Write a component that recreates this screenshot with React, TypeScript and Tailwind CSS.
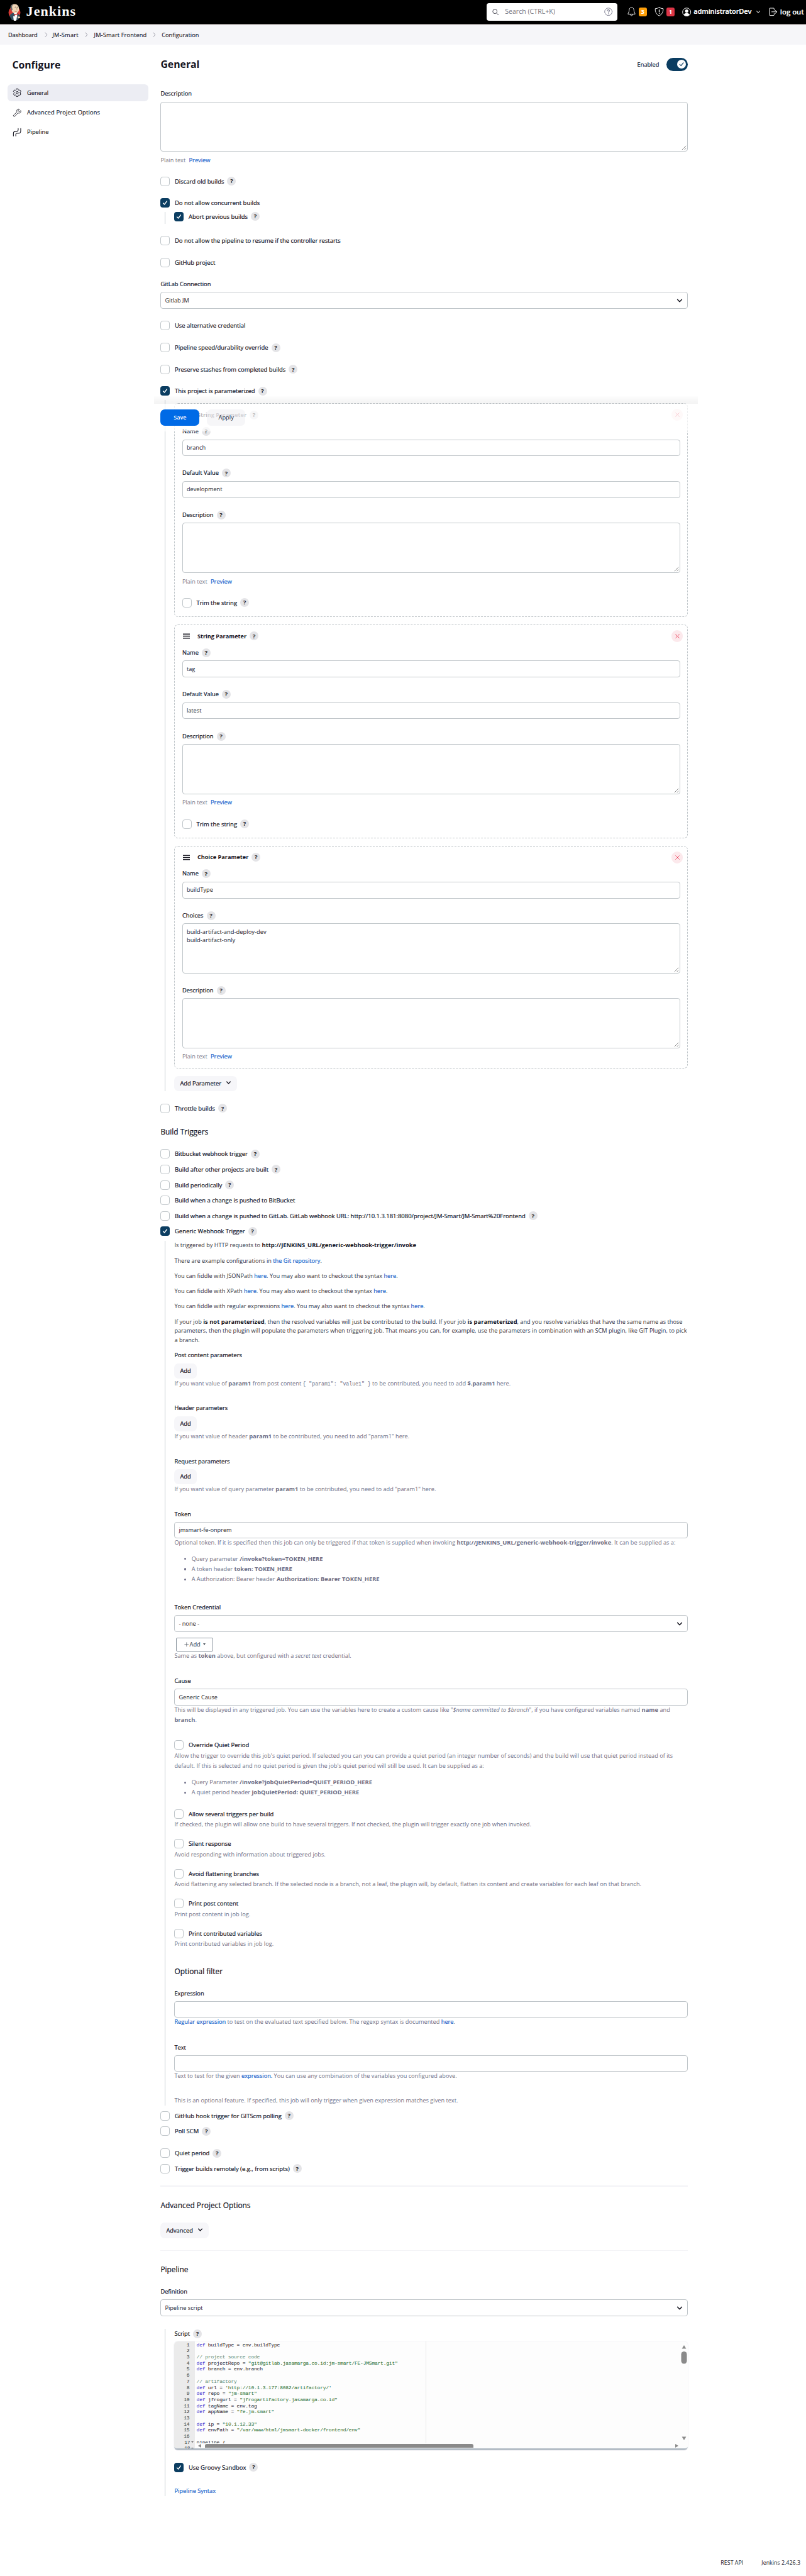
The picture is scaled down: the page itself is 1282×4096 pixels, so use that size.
import React, { ReactNode } from "react";

function Help({ className = "" }: { className?: string }) {
  return (
    <span className={`inline-flex h-[14px] w-[14px] shrink-0 items-center justify-center rounded-full bg-[#e4e4e7] text-[9.6px] font-bold leading-none tracking-normal text-[#1c1c24] [-webkit-text-stroke:0px] ${className}`}>
      ?
    </span>
  );
}

function Tick() {
  return (
    <svg viewBox="0 0 15 15" className="h-full w-full" fill="none" stroke="#fff" strokeWidth="1.4" strokeLinecap="round" strokeLinejoin="round">
      <path d="M4.6 8 L6.6 10 L10.4 4.9" />
    </svg>
  );
}

function Check({ label, on = false, help = false, className = "" }: { label: string; on?: boolean; help?: boolean; className?: string }) {
  return (
    <div className={`flex h-[15px] items-center whitespace-nowrap ${className}`}>
      <span className={on ? "h-[15px] w-[15px] shrink-0 rounded-[4px] bg-[#0b3d61]" : "h-[15px] w-[15px] shrink-0 rounded-[4px] border border-[#c0c6ca] bg-white"}>
        {on && <Tick />}
      </span>
      <span className="ml-[7.6px] text-[9.45px] font-medium leading-[15px] text-[#14141f] [-webkit-text-stroke:0.2px]">{label}</span>
      {help && <Help className="ml-[5px]" />}
    </div>
  );
}

function Label({ children, help = false, className = "" }: { children: ReactNode; help?: boolean; className?: string }) {
  return (
    <div className={`flex h-[14px] items-center whitespace-nowrap text-[9.3px] font-medium leading-[14px] text-[#14141f] [-webkit-text-stroke:0.2px] ${className}`}>
      {children}
      {help && <Help className="ml-[5px]" />}
    </div>
  );
}

function Input({ value = "", select = false, className = "h-[26.6px]" }: { value?: string; select?: boolean; className?: string }) {
  return (
    <div className={`flex items-center justify-between rounded-[4px] border border-[#bfc5c9] bg-white pl-[6px] pr-[7px] text-[9.2px] text-[#22222c] ${className}`}>
      <span>{value}</span>
      {select && (
        <svg viewBox="0 0 10 10" className="h-[10px] w-[10px]" fill="none" stroke="#14141f" strokeWidth="1.5" strokeLinecap="round" strokeLinejoin="round">
          <path d="M1.6 3.2 L5 6.8 L8.4 3.2" />
        </svg>
      )}
    </div>
  );
}

function Area({ lines = [], className = "" }: { lines?: string[]; className?: string }) {
  return (
    <div className={`relative h-[79.3px] rounded-[4px] border border-[#bfc5c9] bg-white pl-[6px] pt-[6px] text-[9.4px] leading-[13.2px] text-[#22222c] ${className}`}>
      {lines.map((l) => (
        <div key={l}>{l}</div>
      ))}
      <svg viewBox="0 0 8 8" className="absolute bottom-[1px] right-[1px] h-[8px] w-[8px]" stroke="#6b6b6b" strokeWidth="0.8">
        <path d="M0.8 7.2 L7.2 0.8 M4.6 7.2 L7.2 4.6" />
      </svg>
    </div>
  );
}

function PlainPreview({ className = "" }: { className?: string }) {
  return (
    <div className={`flex h-[14px] items-center gap-[5.3px] text-[9.2px] leading-[14px] text-[#7c7c88] ${className}`}>
      <span>Plain text</span>
      <span className="text-[9.3px] font-medium text-[#1a66cc] [-webkit-text-stroke:0.2px]">Preview</span>
    </div>
  );
}

function A({ children }: { children: ReactNode }) {
  return <span className="font-medium text-[#1a66cc] [-webkit-text-stroke:0.2px]">{children}</span>;
}

function Hint({ children, className = "" }: { children: ReactNode; className?: string }) {
  return <div className={`whitespace-nowrap text-[9.2px] leading-[16.2px] text-[#6e6e84] ${className}`}>{children}</div>;
}

function Para({ children }: { children: ReactNode }) {
  return <p className="whitespace-nowrap text-[9.2px] leading-[14.55px] text-[#30303c]">{children}</p>;
}

function B({ children, className = "" }: { children: ReactNode; className?: string }) {
  return <b className={`text-[9.38px] font-bold leading-none ${className}`}>{children}</b>;
}

function Bullet({ children, className = "h-[16.3px]" }: { children: ReactNode; className?: string }) {
  return (
    <li className={`flex items-center whitespace-nowrap pl-[15.5px] text-[9.2px] text-[#6e6e84] ${className}`}>
      <span className="mr-[8.6px] h-[3.2px] w-[3.2px] rounded-full bg-[#73738c]" />
      <span>{children}</span>
    </li>
  );
}

function Btn({ children, chevron = false, className = "" }: { children: ReactNode; chevron?: boolean; className?: string }) {
  return (
    <div className={`flex w-fit items-center whitespace-nowrap rounded-[7px] bg-[#f6f6f9] px-[9px] text-[9.3px] font-medium text-[#14141f] [-webkit-text-stroke:0.2px] ${className}`}>
      {children}
      {chevron && (
        <svg viewBox="0 0 10 10" className="-mt-[2px] ml-[7px] h-[9px] w-[9px]" fill="none" stroke="#14141f" strokeWidth="1.4" strokeLinecap="round" strokeLinejoin="round">
          <path d="M1.8 3.4 L5 6.7 L8.2 3.4" />
        </svg>
      )}
    </div>
  );
}

function Card({ title, children, className = "" }: { title: string; children: ReactNode; className?: string }) {
  return (
    <section className={`rounded-[6px] border border-dashed border-[#bfc5c9] bg-white pl-[11.5px] pr-[11.1px] pt-[8.2px] ${className}`}>
      <div className="flex h-[18.5px] items-center pl-[1px]">
        <svg viewBox="0 0 12 9" className="h-[9px] w-[12px]" stroke="#1c1c26" strokeWidth="1.5">
          <path d="M0 1.2 H11 M0 4.5 H11 M0 7.8 H11" />
        </svg>
        <span className="ml-[11px] text-[9.15px] font-bold text-[#14141f]">{title}</span>
        <Help className="ml-[5px]" />
        <span className="-mr-[4px] ml-auto flex h-[18.5px] w-[18.5px] items-center justify-center rounded-full bg-[#fce9ec]">
          <svg viewBox="0 0 8 8" className="h-[7px] w-[7px]" stroke="#e6203f" strokeWidth="0.9">
            <path d="M0.5 0.5 L7.5 7.5 M7.5 0.5 L0.5 7.5" />
          </svg>
        </span>
      </div>
      <div className="pt-[9.9px]">{children}</div>
    </section>
  );
}

function StringCard({ name, value, className = "" }: { name: string; value: string; className?: string }) {
  return (
    <Card title="String Parameter" className={`h-[339.6px] ${className}`}>
      <Label help>Name</Label>
      <Input value={name} className="mt-[5.7px] h-[26.6px]" />
      <Label help className="mt-[20.2px]">Default Value</Label>
      <Input value={value} className="mt-[5.7px] h-[26.6px]" />
      <Label help className="mt-[20.2px]">Description</Label>
      <Area className="mt-[5.7px]" />
      <PlainPreview className="mt-[6.8px]" />
      <Check label="Trim the string" help className="mt-[19.2px]" />
    </Card>
  );
}

function Nested({ children, className = "" }: { children: ReactNode; className?: string }) {
  return <div className={`ml-[7px] border-l border-[#c3c9cd] pl-[14px] ${className}`}>{children}</div>;
}

function ParamAdd({ title, children, className = "mt-[25.9px]" }: { title: string; children: ReactNode; className?: string }) {
  return (
    <div className={className}>
      <Label>{title}</Label>
      <Btn className="mt-[5.3px] h-[24.4px]">Add</Btn>
      <Hint className="h-[14.6px] leading-[14.6px]">{children}</Hint>
    </div>
  );
}

function H2({ children, className = "" }: { children: ReactNode; className?: string }) {
  return <h2 className={`h-[18px] text-[11.9px] font-medium leading-[18px] text-[#14141f] [-webkit-text-stroke:0.2px] ${className}`}>{children}</h2>;
}

type Tok = [string, string?];
const K = "text-[#1f1fd0]";
const S = "text-[#1c6b2c]";
const C = "text-[#5a8a72]";
const code: Tok[][] = [
  [["def", K], [" buildType = env.buildType"]],
  [],
  [["// project source code", C]],
  [["def", K], [" projectRepo = "], ['"git@gitlab.jasamarga.co.id:jm-smart/FE-JMSmart.git"', S]],
  [["def", K], [" branch = env.branch"]],
  [],
  [["// artifactory", C]],
  [["def", K], [" url = "], ["'http://10.1.3.177:8082/artifactory/'", S]],
  [["def", K], [" repo = "], ['"jm-smart"', S]],
  [["def", K], [" jfrogurl = "], ['"jfrogartifactory.jasamarga.co.id"', S]],
  [["def", K], [" tagName = env.tag"]],
  [["def", K], [" appName = "], ['"fe-jm-smart"', S]],
  [],
  [["def", K], [" ip = "], ['"10.1.12.33"', S]],
  [["def", K], [" envPath = "], ['"/var/www/html/jmsmart-docker/frontend/env"', S]],
  [],
  [["pipeline {"]],
  [],
];

function Editor() {
  return (
    <div className="relative mt-[5.7px] h-[172.3px] overflow-hidden rounded-[6px] border-b-[3px] border-[#b4bdc6] bg-[#fdfdfd] font-['Liberation_Mono',monospace] text-[8px] leading-[9.68px] tracking-[-0.23px] text-[#14141f] shadow-[0_0_0_1px_#f5f5f8]">
      <div className="flex h-full">
        <div className="h-full w-[33px] bg-[#ebebeb] pt-[0.6px]">
          {code.map((_, i) => (
            <div key={i} className="flex h-[9.68px] justify-end pr-[9px] text-[#333]">
              <span>{i + 1}</span>
              {i > 15 && <span className="-mr-[6.5px] ml-[1.5px] mt-[3.6px] h-0 w-0 border-x-[2.4px] border-t-[2.8px] border-x-transparent border-t-[#555]" />}
            </div>
          ))}
        </div>
        <div className="h-[161.7px] w-[368px] overflow-hidden border-r border-[#e8e8e8] pl-[2.2px] pt-[0.6px]">
          {code.map((line, i) => (
            <div key={i} className="h-[9.68px] whitespace-pre">
              {line.map(([t, c], j) => (
                <span key={j} className={c}>{t}</span>
              ))}
            </div>
          ))}
        </div>
      </div>
      <svg viewBox="0 0 12 158" className="absolute right-[0.5px] top-[3px] h-[158px] w-[12px]" fill="#8a8a8a">
        <path d="M6 3 L9.4 8.4 H2.6 Z" />
        <rect x="1.5" y="13" width="9" height="19.6" rx="4.5" />
        <path d="M6 154 L9.4 148.4 H2.6 Z" />
      </svg>
      <div className="absolute bottom-0 left-[33px] right-0 flex h-[7px] items-center bg-[#fdfdfd] pl-[5px]">
        <span className="h-0 w-0 border-y-[3.2px] border-r-[5px] border-y-transparent border-r-[#8a8a8a]" />
        <span className="ml-[5.6px] h-[6.6px] w-[427.5px] rounded-t-[3px] bg-[#8a8a8a]" />
        <span className="ml-auto mr-[15px] h-0 w-0 border-y-[3.2px] border-l-[5px] border-y-transparent border-l-[#8a8a8a]" />
      </div>
    </div>
  );
}

function Logo() {
  return (
    <svg viewBox="0 0 40 54" className="h-[27px] w-[20px]">
      <ellipse cx="20" cy="28" rx="19" ry="19.5" fill="#d33833" />
      <path d="M12 52 L5 40 Q5 33 13 30 L22 28 L34 33 Q38 38 37 44 L30 52 Z" fill="#335061" />
      <path d="M8 12 Q7 2 19 0.8 Q32 0.5 34 12 Q36 22 31 27 Q26 32 19 30 Q12 27 11 20 Z" fill="#f0d6b7" />
      <path d="M7.5 15 Q5.5 3 18 1 Q11 5 12.6 13 L14 19 L11 22 Q8 20 7.5 15 Z" fill="#6d6b6d" />
      <path d="M21 11.6 q2.5-2.4 4.6-0.4 M28 11 q2.4-1.8 4.2 0.4" fill="none" stroke="#231f20" strokeWidth="1.3" />
      <path d="M27 13 Q30 18 27 19.4 M20 23.6 Q25 26.6 29 23" fill="none" stroke="#8a5a3c" strokeWidth="1.2" />
      <path d="M18 30 L27 28 L29 40 L23 45 Z" fill="#fff" />
      <path d="M19 31 L25 33.4 L31 30 L31 37 L25 34.6 L20 38 Z" fill="#d33833" />
      <path d="M16 40 H28 L26 53 Q21 55 17.6 53 Z" fill="#fff" />
      <path d="M30 41 Q37 39 38.4 43 Q37 47 31 46 Z" fill="#f0d6b7" />
    </svg>
  );
}

function Header() {
  return (
    <header className="flex h-[39px] shrink-0 items-center border-b border-[#6e6462] bg-black pl-[13px] text-white">
      <Logo />
      <span className="-mt-[1.5px] ml-[8.6px] font-['Liberation_Serif',serif] text-[22px] font-bold leading-none tracking-[1.05px]">Jenkins</span>
      <div className="-mt-[0.5px] ml-auto mr-[15.5px] flex h-[27.6px] w-[207.7px] items-center rounded-[4px] bg-white pl-[9px] pr-[7.5px]">
        <svg viewBox="0 0 12 12" className="h-[10.5px] w-[10.5px]" fill="none" stroke="#333340" strokeWidth="1">
          <circle cx="4.8" cy="4.8" r="3.9" />
          <path d="M7.7 7.7 L11.4 11.4" />
        </svg>
        <span className="ml-[9.4px] text-[10.6px] text-[#75757f]">Search (CTRL+K)</span>
        <svg viewBox="0 0 14 14" className="ml-auto h-[13.4px] w-[13.4px]" fill="none" stroke="#6a6a80" strokeWidth="0.9" strokeLinecap="round">
          <circle cx="7" cy="7" r="6.2" />
          <path d="M5.2 5.4 Q5.3 3.7 7 3.7 Q8.8 3.8 8.8 5.3 Q8.8 6.3 7.7 6.9 Q7 7.3 7 8.2" strokeWidth="1.1" />
          <path d="M7 10.3 v0.1" strokeWidth="1.4" />
        </svg>
      </div>
      <div className="-mt-[0.5px] flex h-[27.6px] w-[284.5px] items-center text-[11.4px]">
        <svg viewBox="0 0 14 16" className="h-[15px] w-[13px]" fill="none" stroke="#fff" strokeWidth="1" strokeLinejoin="round">
          <path d="M7 1 C3.9 1 2.9 3.4 2.9 5.6 C2.9 8.8 1.2 10.2 0.9 12.2 H13.1 C12.8 10.2 11.1 8.8 11.1 5.6 C11.1 3.4 10.1 1 7 1 Z" />
          <path d="M5.2 12.4 Q5.3 14.8 7 14.8 Q8.7 14.8 8.8 12.4" />
        </svg>
        <span className="ml-[5px] flex h-[14px] w-[13.5px] items-center justify-center rounded-[3px] bg-[#fe9f0a] text-[9.5px] font-bold">3</span>
        <svg viewBox="0 0 16 16" className="ml-[12px] h-[15px] w-[15px]" fill="none" stroke="#fff" strokeWidth="1" strokeLinejoin="round" strokeLinecap="round">
          <path d="M8 1 Q5 2.8 1.2 3 Q0.8 11.4 8 15.2 Q15.2 11.4 14.8 3 Q11 2.8 8 1 Z" />
          <path d="M8 5 V8.6 M8 11 v0.2" strokeWidth="1.4" />
        </svg>
        <span className="ml-[3.7px] flex h-[14px] w-[13.5px] items-center justify-center rounded-[3px] bg-[#dc3546] text-[9.5px] font-bold">1</span>
        <svg viewBox="0 0 16 16" className="ml-[12px] h-[14.4px] w-[14.4px]">
          <circle cx="8" cy="8" r="7.2" fill="none" stroke="#fff" strokeWidth="1.1" />
          <circle cx="8" cy="6.2" r="2.9" fill="#fff" />
          <path d="M2.9 12.6 Q4 9.8 8 9.8 Q12 9.8 13.1 12.6 Q11 15 8 15 Q5 15 2.9 12.6 Z" fill="#fff" />
        </svg>
        <span className="ml-[3.6px] w-[93px] text-[11.1px] font-semibold tracking-[-0.15px] [-webkit-text-stroke:0.2px]">administratorDev</span>
        <svg viewBox="0 0 10 10" className="ml-[6px] h-[8px] w-[8px]" fill="none" stroke="#ddd" strokeWidth="1.3">
          <path d="M1.6 3 L5 6.6 L8.4 3" />
        </svg>
        <svg viewBox="0 0 14 14" className="ml-[13px] h-[13.6px] w-[13.6px]" fill="none" stroke="#fff" strokeWidth="1" strokeLinecap="round" strokeLinejoin="round">
          <path d="M8.6 4.2 V2.2 Q8.6 1 7.4 1 H2 Q0.8 1 0.8 2.2 V11.8 Q0.8 13 2 13 H7.4 Q8.6 13 8.6 11.8 V9.8" />
          <path d="M4.6 7 H13 M10.8 4.6 L13.2 7 L10.8 9.4" />
        </svg>
        <span className="ml-[4px] whitespace-nowrap font-semibold [-webkit-text-stroke:0.2px]">log out</span>
      </div>
    </header>
  );
}

function Sep() {
  return (
    <svg viewBox="0 0 5 9" className="-mt-[1px] h-[8.5px] w-[4.6px]" fill="none" stroke="#8a8a98" strokeWidth="0.9">
      <path d="M0.8 0.6 L4.2 4.5 L0.8 8.4" />
    </svg>
  );
}

function Sidebar() {
  return (
    <aside className="w-[255.4px] shrink-0 pl-[12px]">
      <h1 className="ml-[7.4px] mt-[22px] h-[20px] text-[15.8px] font-bold leading-[20px] text-[#14141f]">Configure</h1>
      <nav className="mt-[21.3px] flex w-[223.5px] flex-col gap-[3.9px] text-[9.3px] font-medium text-[#14141f] [-webkit-text-stroke:0.15px]">
        <div className="flex h-[27.3px] items-center gap-[8.4px] rounded-[6px] bg-[#ecedf3] pl-[8px]">
          <svg viewBox="0 0 512 512" className="h-[14.6px] w-[14.6px]" fill="none" stroke="#14141f" strokeWidth="34" strokeLinecap="round" strokeLinejoin="round">
            <path d="M262.29 192.31a64 64 0 1057.4 57.4 64.13 64.13 0 00-57.4-57.4zM416.39 256a154.34 154.34 0 01-1.53 20.79l45.21 35.46a10.81 10.81 0 012.45 13.75l-42.77 74a10.81 10.81 0 01-13.14 4.59l-44.9-18.08a16.11 16.11 0 00-15.17 1.75A164.48 164.48 0 01325 400.8a15.94 15.94 0 00-8.82 12.14l-6.73 47.89a11.08 11.08 0 01-10.68 9.17h-85.54a11.11 11.11 0 01-10.69-8.87l-6.72-47.82a16.07 16.07 0 00-9-12.22 155.3 155.3 0 01-21.46-12.57 16 16 0 00-15.11-1.71l-44.89 18.07a10.81 10.81 0 01-13.14-4.58l-42.77-74a10.8 10.8 0 012.45-13.75l38.21-30a16.05 16.05 0 006-14.08c-.36-4.17-.58-8.33-.58-12.5s.21-8.27.58-12.35a16 16 0 00-6.07-13.94l-38.19-30A10.81 10.81 0 0149.48 186l42.77-74a10.81 10.81 0 0113.14-4.59l44.9 18.08a16.11 16.11 0 0015.17-1.75A164.48 164.48 0 01187 111.2a15.94 15.94 0 008.82-12.14l6.73-47.89A11.08 11.08 0 01213.23 42h85.54a11.11 11.11 0 0110.69 8.87l6.72 47.82a16.07 16.07 0 009 12.22 155.3 155.3 0 0121.46 12.57 16 16 0 0015.11 1.71l44.89-18.07a10.81 10.81 0 0113.14 4.58l42.77 74a10.8 10.8 0 01-2.45 13.75l-38.21 30a16.05 16.05 0 00-6.05 14.08c.33 4.14.55 8.3.55 12.47z" />
          </svg>
          General
        </div>
        <div className="flex h-[27.3px] items-center gap-[8.4px] pl-[8px]">
          <svg viewBox="0 0 512 512" className="h-[14.6px] w-[14.6px]" fill="none" stroke="#14141f" strokeWidth="30" strokeLinecap="round" strokeLinejoin="round">
            <path d="M393.87 190a32.1 32.1 0 01-45.25 0l-26.57-26.57a32.09 32.09 0 010-45.26L382.19 58a1 1 0 00-.3-1.64c-38.82-16.64-89.15-8.16-121.11 23.57-30.58 30.35-32.32 76-21.12 115.84a31.93 31.93 0 01-9.06 32.08L64 380a48.17 48.17 0 1068 68l153.86-167a31.93 31.93 0 0131.6-9.13c39.54 10.59 84.54 8.6 114.72-21.19 32.49-32 39.5-88.56 23.75-120.93a1 1 0 00-1.6-.26z" />
          </svg>
          <span className="tracking-[0.18px]">Advanced Project Options</span>
        </div>
        <div className="flex h-[27.3px] items-center gap-[8.4px] pl-[8px]">
          <svg viewBox="0 0 16 16" className="h-[14.6px] w-[14.6px]" fill="none" stroke="#14141f" strokeWidth="1.2" strokeLinecap="round" strokeLinejoin="round">
            <path d="M1.5 14.6 V10 Q1.5 6.4 5 6.4 H7 Q9.8 6.4 9.8 3.6 V1.4" />
            <path d="M5.6 14.6 V11.6 Q5.6 9.9 7.4 9.9 H10 Q14.2 9.9 14.2 5.8 V1.4" />
          </svg>
          Pipeline
        </div>
      </nav>
    </aside>
  );
}

export default function App() {
  return (
    <div className="relative flex h-[4096px] w-[1282px] flex-col overflow-hidden bg-white font-['Open_Sans',sans-serif]">
      <Header />
      <div className="flex h-[31.8px] shrink-0 items-center whitespace-nowrap bg-[#f6f6f9] pl-[13px] pt-[1.4px] text-[9.3px] text-[#14141f] [-webkit-text-stroke:0.1px]">
        <span className="w-[58.4px] tracking-[-0.15px]">Dashboard</span>
        <Sep />
        <span className="ml-[7.4px] w-[51.6px] tracking-[0.2px]">JM-Smart</span>
        <Sep />
        <span className="ml-[10px] w-[93.6px] tracking-[0.1px]">JM-Smart Frontend</span>
        <Sep />
        <span className="ml-[9.4px]">Configuration</span>
      </div>

      <div className="flex">
        <Sidebar />
        <main className="w-[839px]">
          <div className="mt-[21.4px] flex h-[20.6px] items-center">
            <h1 className="text-[15.8px] font-bold leading-[20px] text-[#14141f]">General</h1>
            <span className="ml-auto mr-[11.4px] text-[9.3px] font-medium text-[#14141f] [-webkit-text-stroke:0.15px]">Enabled</span>
            <span className="flex h-[20.6px] w-[34.5px] items-center justify-end rounded-full bg-[#0b3d61] pr-[3.3px]">
              <svg viewBox="0 0 14 14" className="h-[14px] w-[14px]">
                <circle cx="7" cy="7" r="7" fill="#fff" />
                <path d="M4.2 7.4 L6.2 9.4 L9.9 4.8" fill="none" stroke="#0b3d61" strokeWidth="1.1" strokeLinecap="round" />
              </svg>
            </span>
          </div>

          <Label className="mt-[29.4px]">Description</Label>
          <Area className="mt-[5.5px]" />
          <PlainPreview className="mt-[6.6px]" />
          <Check label="Discard old builds" help className="mt-[19.2px]" />
          <Check label="Do not allow concurrent builds" on className="mt-[19.3px]" />
          <Nested className="mt-[6.6px] h-[19px]">
            <Check label="Abort previous builds" on help />
          </Nested>
          <Check label="Do not allow the pipeline to resume if the controller restarts" className="mt-[19.2px]" />
          <Check label="GitHub project" className="mt-[19.8px]" />
          <Label className="mt-[20.2px]">GitLab Connection</Label>
          <Input value="Gitlab JM" select className="mt-[5.4px] h-[26.6px]" />
          <Check label="Use alternative credential" className="mt-[19.6px]" />
          <Check label="Pipeline speed/durability override" help className="mt-[19.8px]" />
          <Check label="Preserve stashes from completed builds" help className="mt-[19.7px]" />
          <Check label="This project is parameterized" on help className="mt-[19.6px]" />

          <Nested className="relative mt-[6.8px] pt-[5px]">
            <StringCard name="branch" value="development" />
            <StringCard name="tag" value="latest" className="mt-[12.2px]" />
            <Card title="Choice Parameter" className="mt-[12.2px] h-[353.8px]">
              <Label help>Name</Label>
              <Input value="buildType" className="mt-[5.7px] h-[26.6px]" />
              <Label help className="mt-[20px]">Choices</Label>
              <Area lines={["build-artifact-and-deploy-dev", "build-artifact-only"]} className="mt-[5.6px]" />
              <Label help className="mt-[20.1px]">Description</Label>
              <Area className="mt-[5.7px]" />
              <PlainPreview className="mt-[6.6px]" />
            </Card>
            <Btn chevron className="mt-[11.9px] h-[24.9px] w-[95px]">Add Parameter</Btn>

            {/* Sticky action bar floating over the first parameter card */}
            <div className="absolute -left-[18px] -right-[16px] -top-[8px] h-[58.2px]">
              <div className="h-[14px] bg-gradient-to-b from-transparent to-black/5" />
              <div className="flex h-[44px] gap-[11.5px] bg-white/70 pl-[10px] pt-[9.2px]">
                <div className="flex h-[25.2px] w-[62px] items-center justify-center rounded-[7px] bg-[#006ae6] text-[9.1px] font-semibold text-white">Save</div>
                <div className="flex h-[25.2px] w-[61.6px] items-center justify-center rounded-[7px] bg-[#ededf2]/50 text-[9.3px] font-medium text-[#2a2a35]">Apply</div>
              </div>
            </div>
          </Nested>

          <Check label="Throttle builds" help className="mt-[19.4px]" />

          <H2 className="mt-[20px]">Build Triggers</H2>
          <Check label="Bitbucket webhook trigger" help className="mt-[19.4px]" />
          <Check label="Build after other projects are built" help className="mt-[9.66px]" />
          <Check label="Build periodically" help className="mt-[9.66px]" />
          <Check label="Build when a change is pushed to BitBucket" className="mt-[9.66px]" />
          <Check label="Build when a change is pushed to GitLab. GitLab webhook URL: http://10.1.3.181:8080/project/JM-Smart/JM-Smart%20Frontend" help className="mt-[9.66px]" />
          <Check label="Generic Webhook Trigger" on help className="mt-[9.66px]" />

          <Nested className="mt-[8px]">
            <div className="flex flex-col gap-[9.7px]">
              <Para>Is triggered by HTTP requests to <B className="text-[#14141f]">http://JENKINS_URL/generic-webhook-trigger/invoke</B></Para>
              <Para>There are example configurations in <A>the Git repository</A>.</Para>
              <Para>You can fiddle with JSONPath <A>here</A>. You may also want to checkout the syntax <A>here</A>.</Para>
              <Para>You can fiddle with XPath <A>here</A>. You may also want to checkout the syntax <A>here</A>.</Para>
              <Para>You can fiddle with regular expressions <A>here</A>. You may also want to checkout the syntax <A>here</A>.</Para>
              <Para>
                If your job <B className="text-[#14141f]">is not parameterized</B>, then the resolved variables will just be contributed to the build. If your job <B className="text-[#14141f]">is parameterized</B>, and you resolve variables that have the same name as those
                <br />
                parameters, then the plugin will populate the parameters when triggering job. That means you can, for example, use the parameters in combination with an SCM plugin, like GIT Plugin, to pick
                <br />
                a branch.
              </Para>
            </div>

            <ParamAdd title="Post content parameters" className="mt-[10px]">
              If you want value of <B>param1</B> from post content <span className="font-['Liberation_Mono',monospace] text-[8.2px]">{'{ "param1": "value1" }'}</span> to be contributed, you need to add <B>$.param1</B> here.
            </ParamAdd>
            <ParamAdd title="Header parameters">
              If you want value of header <B>param1</B> to be contributed, you need to add "param1" here.
            </ParamAdd>
            <ParamAdd title="Request parameters">
              If you want value of query parameter <B>param1</B> to be contributed, you need to add "param1" here.
            </ParamAdd>

            <Label className="mt-[25.7px]">Token</Label>
            <Input value="jmsmart-fe-onprem" className="mt-[5.8px] h-[26px]" />
            <Hint className="-mt-[1px]">Optional token. If it is specified then this job can only be triggered if that token is supplied when invoking <B>http://JENKINS_URL/generic-webhook-trigger/invoke</B>. It can be supplied as a:</Hint>
            <ul className="mt-[9px]">
              <Bullet>Query parameter <B>/invoke?token=TOKEN_HERE</B></Bullet>
              <Bullet>A token header <B>token: TOKEN_HERE</B></Bullet>
              <Bullet>A Authorization: Bearer header <B>Authorization: Bearer TOKEN_HERE</B></Bullet>
            </ul>

            <Label className="mt-[29.5px]">Token Credential</Label>
            <Input value="- none -" select className="mt-[5.4px] h-[26.5px]" />
            <div className="ml-[2.8px] mt-[9.6px] flex h-[21.5px] w-[59px] items-center justify-center rounded-[2px] border border-[#8c96a0] bg-white text-[9.3px] text-[#4d545d] [-webkit-text-stroke:0.15px]">
              <svg viewBox="0 0 8 8" className="mr-[1.5px] h-[7.5px] w-[7.5px]" stroke="#5c636b" strokeWidth="0.8">
                <path d="M4 0.4 V7.6 M0.4 4 H7.6" />
              </svg>
              Add
              <span className="-mt-[2px] ml-[4px] h-0 w-0 border-x-[2.8px] border-t-[3.2px] border-x-transparent border-t-[#4d545d]" />
            </div>
            <Hint className="-mt-[1px]">Same as <B>token</B> above, but configured with a <i>secret text</i> credential.</Hint>

            <Label className="mt-[24.8px]">Cause</Label>
            <Input value="Generic Cause" className="mt-[5.2px] h-[26.5px]" />
            <Hint className="-mt-[1px]">
              This will be displayed in any triggered job. You can use the variables here to create a custom cause like "<i>$name committed to $branch</i>", if you have configured variables named <B>name</B> and
              <br />
              <B>branch</B>.
            </Hint>

            <Check label="Override Quiet Period" className="mt-[23.7px]" />
            <Hint className="mt-[2.2px]">
              Allow the trigger to override this job's quiet period. If selected you can you can provide a quiet period (an integer number of seconds) and the build will use that quiet period instead of its
              <br />
              default. If this is selected and no quiet period is given the job's quiet period will still be used. It can be supplied as a:
            </Hint>
            <ul className="mt-[9.7px]">
              <Bullet className="h-[16.2px]">Query Parameter <B>/invoke?jobQuietPeriod=QUIET_PERIOD_HERE</B></Bullet>
              <Bullet className="h-[16.2px]">A quiet period header <B>jobQuietPeriod: QUIET_PERIOD_HERE</B></Bullet>
            </ul>

            <Check label="Allow several triggers per build" className="mt-[18.2px]" />
            <Hint className="mt-[1.9px]">If checked, the plugin will allow one build to have several triggers. If not checked, the plugin will trigger exactly one job when invoked.</Hint>
            <Check label="Silent response" className="mt-[14.4px]" />
            <Hint className="mt-[1.9px]">Avoid responding with information about triggered jobs.</Hint>
            <Check label="Avoid flattening branches" className="mt-[14.4px]" />
            <Hint className="mt-[1.9px]">Avoid flattening any selected branch. If the selected node is a branch, not a leaf, the plugin will, by default, flatten its content and create variables for each leaf on that branch.</Hint>
            <Check label="Print post content" className="mt-[14.4px]" />
            <Hint className="mt-[1.9px]">Print post content in job log.</Hint>
            <Check label="Print contributed variables" className="mt-[14.4px]" />
            <Hint className="mt-[1.9px]">Print contributed variables in job log.</Hint>

            <H2 className="mt-[25px]">Optional filter</H2>
            <Label className="mt-[20.4px]">Expression</Label>
            <Input className="mt-[5.2px] h-[26px]" />
            <Hint className="-mt-[1.4px]"><A>Regular expression</A> to test on the evaluated text specified below. The regexp syntax is documented <A>here</A>.</Hint>
            <Label className="mt-[25.7px]">Text</Label>
            <Input className="mt-[5.6px] h-[26px]" />
            <Hint className="-mt-[0.9px]">Text to test for the given <A>expression.</A> You can use any combination of the variables you configured above.</Hint>
            <Hint className="mt-[22.4px]">This is an optional feature. If specified, this job will only trigger when given expression matches given text.</Hint>
          </Nested>

          <Check label="GitHub hook trigger for GITScm polling" help className="mt-[8.4px]" />
          <Check label="Poll SCM" help className="mt-[9.9px]" />
          <Check label="Quiet period" help className="mt-[19.6px]" />
          <Check label="Trigger builds remotely (e.g., from scripts)" help className="mt-[9.8px]" />

          <div className="mt-[19.4px] h-[1.5px] bg-[#f3f3f6]" />
          <H2 className="mt-[20.1px]">Advanced Project Options</H2>
          <Btn chevron className="mt-[19.2px] h-[25px] w-[73.2px]">Advanced</Btn>
          <div className="mt-[18.9px] h-[1.5px] bg-[#f3f3f6]" />
          <H2 className="mt-[20px]">Pipeline</H2>
          <Label className="mt-[19.7px]">Definition</Label>
          <Input value="Pipeline script" select className="mt-[5.1px] h-[26.8px]" />

          <Nested className="mt-[20px] pt-[0.5px]">
            <Label help>Script</Label>
            <Editor />
            <Check label="Use Groovy Sandbox" on help className="mt-[20.2px]" />
            <div className="mt-[23.6px] text-[9.3px] leading-[14.6px]"><A>Pipeline Syntax</A></div>
          </Nested>
        </main>
      </div>

      <footer className="mb-[12.8px] mt-auto flex justify-end gap-[29px] pr-[9px] text-[8.9px] leading-[16px] text-[#14141f]">
        <span>REST API</span>
        <span>Jenkins 2.426.3</span>
      </footer>
    </div>
  );
}
